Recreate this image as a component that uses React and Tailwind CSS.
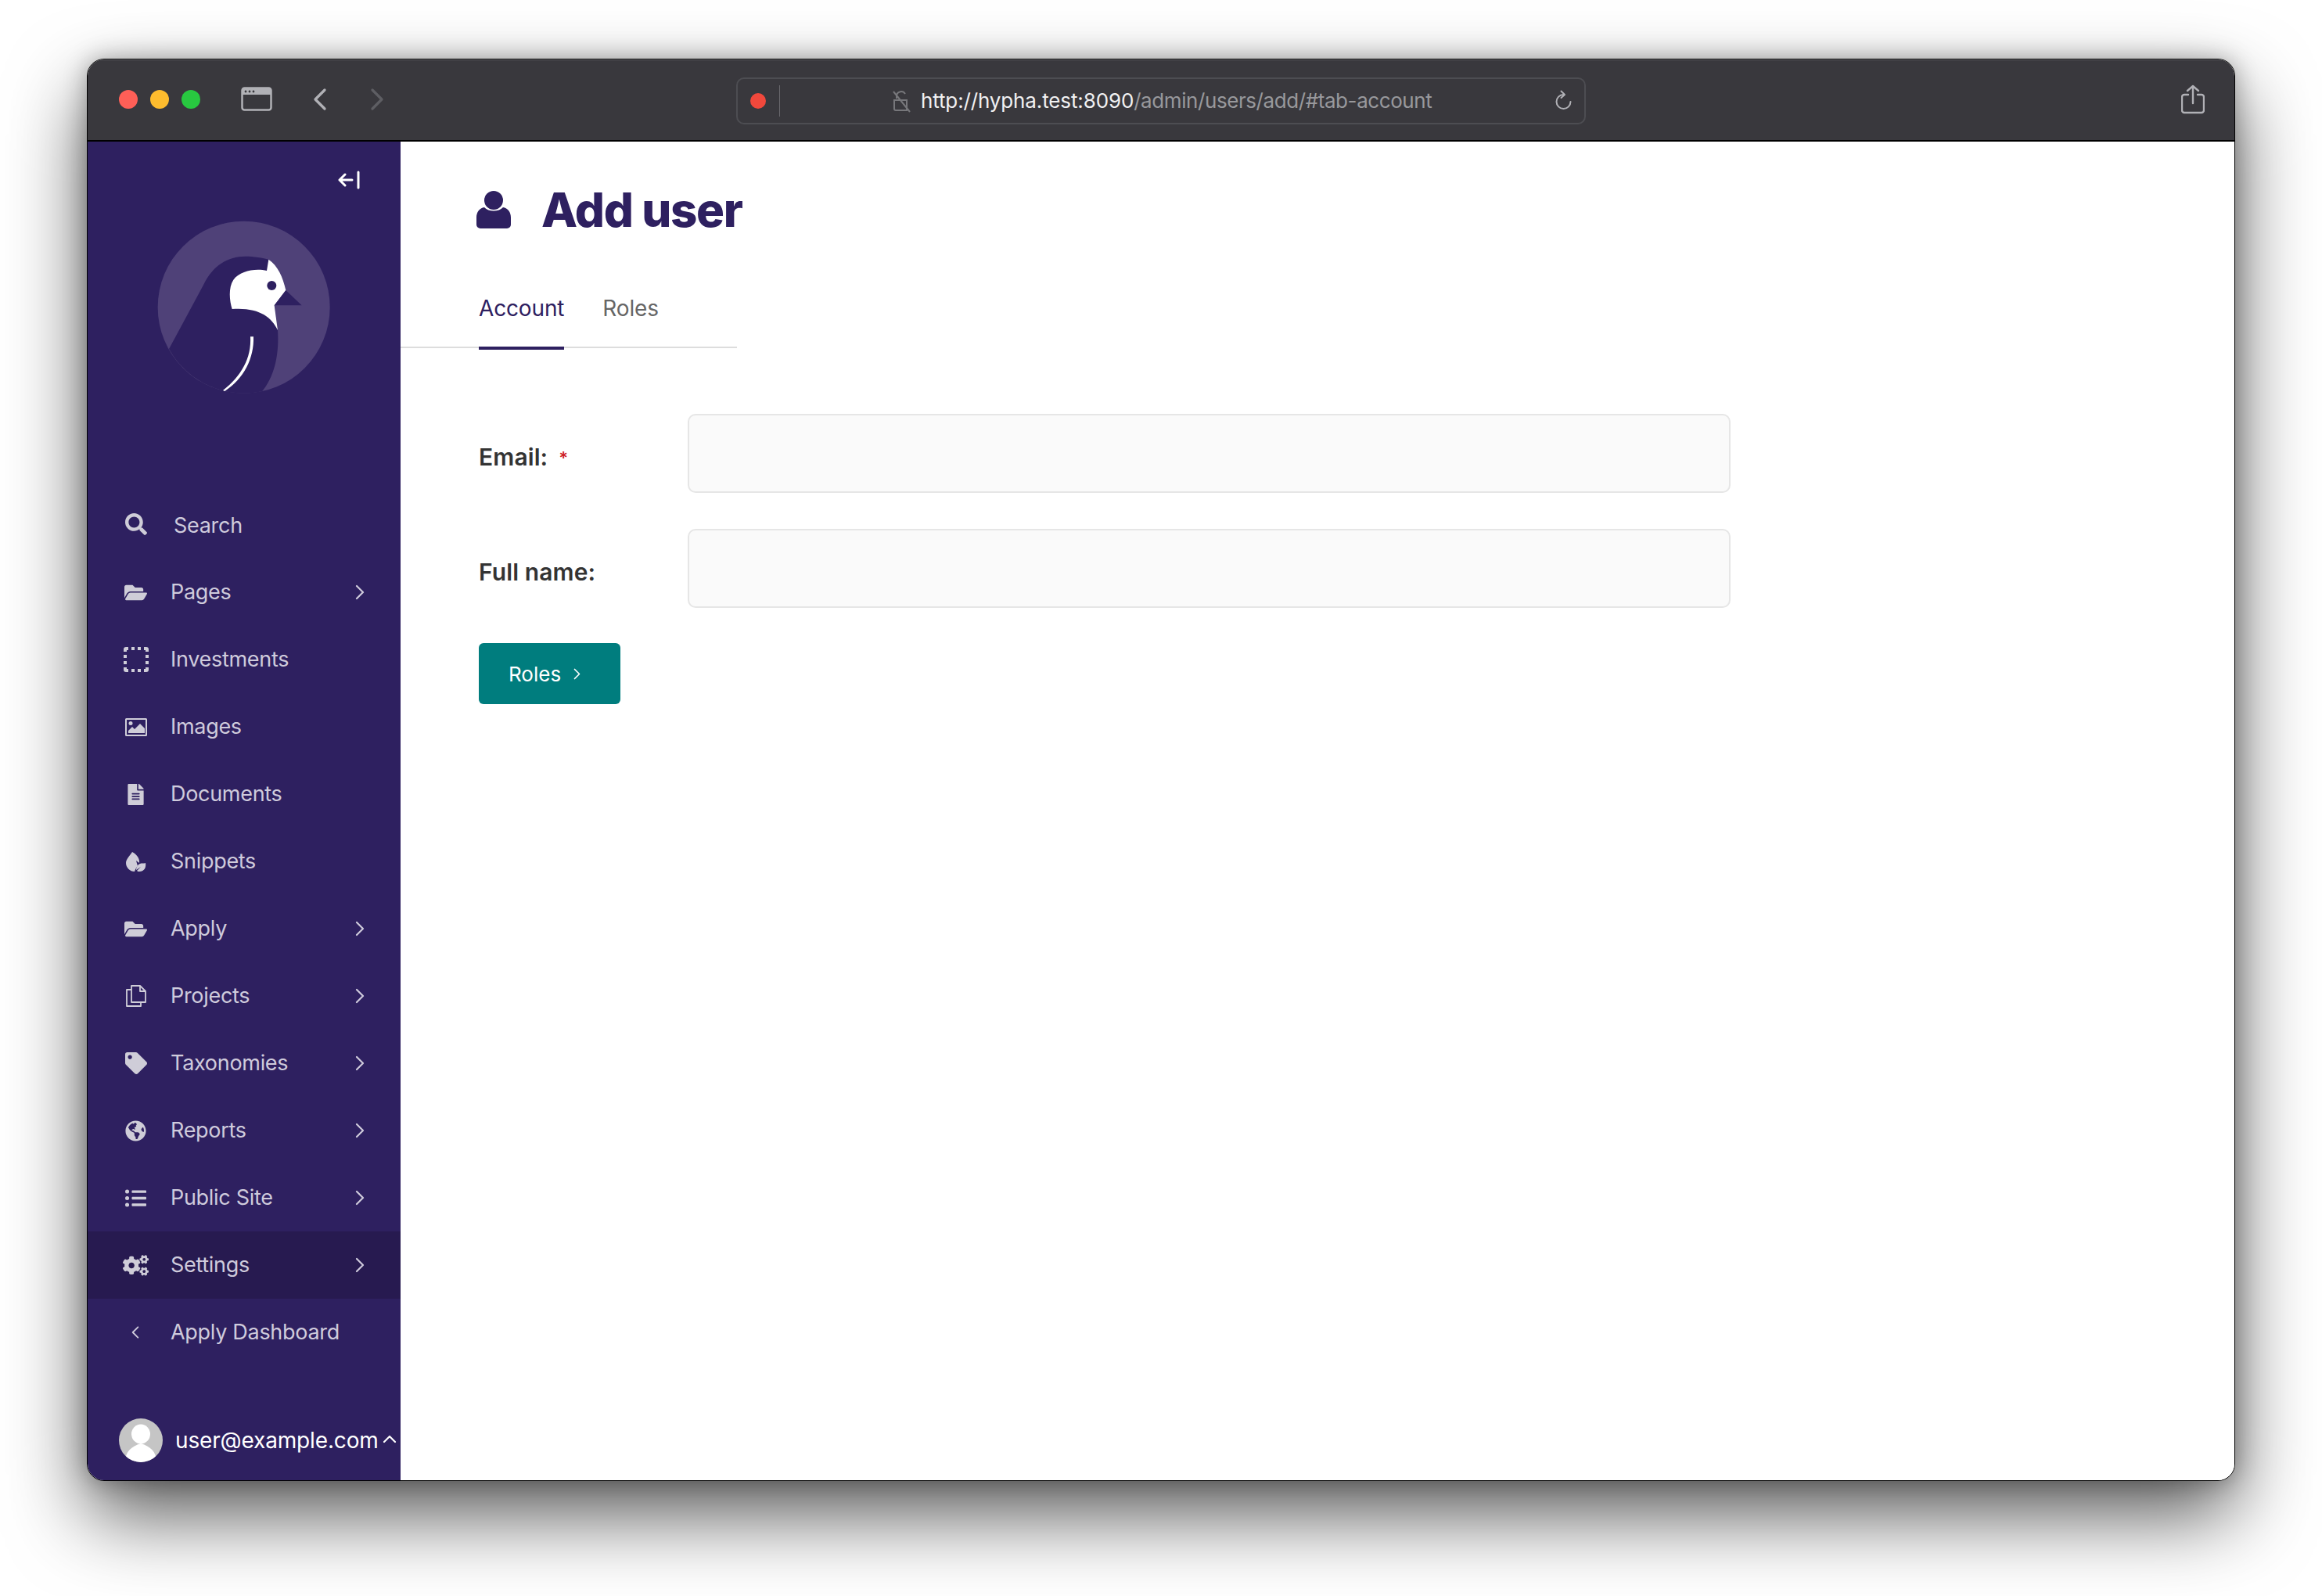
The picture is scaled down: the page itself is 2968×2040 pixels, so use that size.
import React from "react";
import { FaSearch, FaFolderOpen, FaFileAlt, FaTag, FaGlobeAmericas, FaListUl, FaCogs } from "react-icons/fa";

const Chevron = ({ className = "", dir = "right" }) => (
  <svg viewBox="0 0 12 20" className={className} fill="none" stroke="currentColor" strokeWidth="2.2" strokeLinecap="round" strokeLinejoin="round">
    <path d={dir === "right" ? "M2 2l8 8-8 8" : "M10 2l-8 8 8 8"} />
  </svg>
);

const Dashed = () => (
  <svg viewBox="0 0 32 32" className="w-[32px] h-[32px]" fill="currentColor">
    <path d="M0 3a3 3 0 0 1 3-3h3v4H4v2H0zM26 0h3a3 3 0 0 1 3 3v3h-4V4h-2zM0 26h4v2h2v4H3a3 3 0 0 1-3-3zM28 26h4v3a3 3 0 0 1-3 3h-3v-4h2z" />
    <rect x="10" y="0" width="4" height="4" /><rect x="18" y="0" width="4" height="4" />
    <rect x="10" y="28" width="4" height="4" /><rect x="18" y="28" width="4" height="4" />
    <rect x="0" y="10" width="4" height="4" /><rect x="0" y="18" width="4" height="4" />
    <rect x="28" y="10" width="4" height="4" /><rect x="28" y="18" width="4" height="4" />
  </svg>
);

const ImageIcon = () => (
  <svg viewBox="0 0 28 23" className="w-[28px] h-[23px]" fill="currentColor">
    <path fillRule="evenodd" d="M1.5 0h25A1.5 1.5 0 0 1 28 1.5v20a1.5 1.5 0 0 1-1.5 1.5h-25A1.5 1.5 0 0 1 0 21.500v-20A1.500 1.500 0 0 1 1.500 0zM2 2v19h24V2z" />
    <circle cx="7" cy="6.500" r="2.500" />
    <path d="M4 19v-3l5-5 3 3 7-7 6 6v6z" />
  </svg>
);

const LeafIcon = () => (
  <svg viewBox="0 0 27 27" className="w-[27px] h-[27px]" fill="currentColor">
    <path d="M9 1C15 4 19 10 18 15L14 12L16 19C14 21 13 23 12 26C6 26 1 21 1 15C1 10 6 6 9 1Z" />
    <path d="M26 15C27 20 25 26 18 26C17 26 16 26 15 25L20 20L14 24C14 21 16 17 19 16C21 15 24 16 26 15Z" />
  </svg>
);

const CopyIcon = () => (
  <svg viewBox="0 0 26 28" className="w-[26px] h-[28px]" fill="none" stroke="currentColor" strokeWidth="1.800" strokeLinejoin="round">
    <path d="M7 1h11l7 7v14H7z" />
    <path d="M18 1v7h7" />
    <path d="M7 6H1v21h18v-5" />
  </svg>
);

const items = [
  { label: "Pages", icon: <FaFolderOpen className="w-[29px] h-[29px]" />, more: true },
  { label: "Investments", icon: <Dashed /> },
  { label: "Images", icon: <ImageIcon /> },
  { label: "Documents", icon: <FaFileAlt className="w-[27px] h-[27px]" /> },
  { label: "Snippets", icon: <LeafIcon /> },
  { label: "Apply", icon: <FaFolderOpen className="w-[29px] h-[29px]" />, more: true },
  { label: "Projects", icon: <CopyIcon />, more: true },
  { label: "Taxonomies", icon: <FaTag className="w-[28px] h-[28px]" />, more: true },
  { label: "Reports", icon: <FaGlobeAmericas className="w-[27px] h-[27px]" />, more: true },
  { label: "Public Site", icon: <FaListUl className="w-[27px] h-[27px]" />, more: true },
  { label: "Settings", icon: <FaCogs className="w-[33px] h-[33px]" />, more: true, active: true },
];

function Row({ label, icon, more, active }) {
  return (
    <div className={`flex items-center h-[86px] text-[27px] tracking-[-0.3px] text-[#cfcbdc] ${active ? "bg-[#271a50]" : ""}`}>
      <div className="w-[124px] pr-[1px] flex justify-center shrink-0 text-[#cfcdd8]">{icon}</div>
      <span className="flex-1 -ml-[18px]">{label}</span>
      {more && <Chevron className="w-[12px] h-[20px] mr-[46px]" />}
    </div>
  );
}

function Logo() {
  return (
    <svg viewBox="0 0 810 780" className="w-[270px] h-[260px]">
      <circle cx="395" cy="395" r="330" fill="#4f4178" />
      <path d="M108 555L240 310C275 235 335 200 400 200C430 200 470 205 490 212L525 483C530 560 520 650 465 718A330 330 0 0 1 108 555Z" fill="#2e2060" />
      <path d="M490 212C525 235 545 280 556 330L512 388L525 483C500 430 450 395 350 402C340 370 335 320 355 290C380 255 440 245 483 255Z" fill="#fff" />
      <path d="M556 330L617 388H512Z" fill="#2e2060" />
      <circle cx="502" cy="312" r="18" fill="#2e2060" />
      <path d="M420 508H432C435 590 395 670 322 717L315 714C385 660 425 590 420 508Z" fill="#fff" />
    </svg>
  );
}

function TitleBar() {
  return (
    <div className="relative h-[105px] shrink-0 bg-[#39383d] border-b-2 border-black shadow-[inset_0_1px_0_#66666a] flex items-center">
      <div className="flex items-center gap-[16px] ml-[40px] -mt-[2px]">
        <div className="w-[24px] h-[24px] rounded-full bg-[#ff5f57]" />
        <div className="w-[24px] h-[24px] rounded-full bg-[#febc2e]" />
        <div className="w-[24px] h-[24px] rounded-full bg-[#28c840]" />
      </div>
      <svg viewBox="0 0 40 31" className="w-[40px] h-[31px] ml-[52px] -mt-[2px]" fill="none">
        <rect x="1.500" y="1.500" width="37" height="28" rx="3" stroke="#b1b1b6" strokeWidth="2.500" />
        <path d="M1.500 5a3 3 0 0 1 3-3.500h31a3 3 0 0 1 3 3.500v5h-37z" fill="#b1b1b6" />
        <circle cx="6" cy="6" r="1.400" fill="#39383d" /><circle cx="11" cy="6" r="1.400" fill="#39383d" /><circle cx="16" cy="6" r="1.400" fill="#39383d" />
      </svg>
      <Chevron className="w-[18px] h-[30px] ml-[52px] -mt-[2px] text-[#b1b1b6]" dir="left" />
      <Chevron className="w-[18px] h-[30px] ml-[55px] -mt-[2px] text-[#5e5e63]" />
      <div className="absolute left-[829px] top-[23px] w-[1086px] h-[60px] rounded-[10px] border-2 border-[#4d4d52] flex items-center">
        <div className="w-[20px] h-[20px] rounded-full bg-[#f1483c] ml-[16px] shrink-0" />
        <div className="w-[1px] h-[40px] bg-[#68686c] ml-[17px] shrink-0" />
        <svg viewBox="0 0 25 29" className="w-[25px] h-[29px] ml-[143px] shrink-0" fill="none" stroke="#77777b" strokeWidth="2">
          <path d="M6 11V7a6 6 0 0 1 11-2M3 13h16v13H5a2 2 0 0 1-2-2zM2 2l21 26" />
        </svg>
        <span className="ml-[12px] text-[26px] tracking-[-0.13px] whitespace-nowrap text-[#f1f1f2] -translate-y-[1px]">
          http://hypha.test:8090<span className="text-[#98989c] tracking-[-0.42px]">/admin/users/add/#tab-account</span>
        </span>
        <svg viewBox="0 0 22 26" className="absolute right-[15px] top-[14px] w-[22px] h-[26px]" fill="none" stroke="#b1b1b6" strokeWidth="2" strokeLinecap="round" strokeLinejoin="round">
          <path d="M10.500 6A9 9 0 1 0 19.500 15" />
          <path d="M7.500 1.500L12 6l-4.500 4" />
        </svg>
      </div>
      <svg viewBox="0 0 30 38" className="absolute left-[2676px] top-[32px] w-[30px] h-[38px]" fill="none" stroke="#b1b1b6" strokeWidth="2.400" strokeLinecap="round" strokeLinejoin="round">
        <path d="M9 13H4a3 3 0 0 0-3 3v17a3 3 0 0 0 3 3h22a3 3 0 0 0 3-3V16a3 3 0 0 0-3-3h-5" />
        <path d="M15 24V2M8 8l7-6 7 6" />
      </svg>
    </div>
  );
}

function Sidebar() {
  return (
    <aside className="w-[400px] shrink-0 bg-[#2e2060] flex flex-col">
      <div className="flex justify-end pr-[52px] pt-[37px]">
        <svg viewBox="0 0 28 24" className="w-[28px] h-[24px]" fill="none" stroke="#fff" strokeWidth="3" strokeLinecap="round" strokeLinejoin="round">
          <path d="M26 2v20M18 12H2M9 5l-7 7 7 7" />
        </svg>
      </div>
      <div className="pl-[68px] mt-[19px] mb-[110px]"><Logo /></div>
      <div className="flex items-center h-[84px] mt-[-1px] text-[27px] tracking-[-0.3px] text-[#cfcbdc]">
        <FaSearch className="w-[28px] h-[28px] ml-[48px] -mt-[4px] text-[#cfcdd8]" />
        <span className="ml-[34px]">Search</span>
      </div>
      {items.map((it) => <Row key={it.label} {...it} />)}
      <div className="flex items-center h-[86px] text-[27px] tracking-[-0.3px] text-[#cfcbdc]">
        <div className="w-[124px] pr-[2px] flex justify-center shrink-0"><Chevron className="w-[10px] h-[18px]" dir="left" /></div>
        <span className="-ml-[18px]">Apply Dashboard</span>
      </div>
      <div className="mt-auto mb-[23px] flex items-center pl-[40px]">
        <svg viewBox="0 0 56 56" className="w-[56px] h-[56px] shrink-0">
          <defs><clipPath id="av"><circle cx="28" cy="28" r="28" /></clipPath></defs>
          <circle cx="28" cy="28" r="28" fill="#c5c5c5" />
          <g clipPath="url(#av)" fill="#fff">
            <ellipse cx="28" cy="20" rx="12" ry="12.500" />
            <path d="M8 56c0-14 8-20 20-24 12 4 20 10 20 24z" />
          </g>
        </svg>
        <span className="ml-[16px] text-[28px] tracking-[-0.15px] text-white whitespace-nowrap">user@example.com</span>
        <svg viewBox="0 0 18 11" className="w-[18px] h-[11px] ml-[5px] -mt-[4px] shrink-0" fill="none" stroke="#fff" strokeWidth="2.200" strokeLinecap="round" strokeLinejoin="round">
          <path d="M2 9l7-7 7 7" />
        </svg>
      </div>
    </aside>
  );
}

function Field({ label, required }) {
  return (
    <div className="flex items-center h-[101px]">
      <label className="w-[267px] shrink-0 text-[30px] font-semibold tracking-[0.1px] text-[#333] translate-y-[5px]">
        {label}
        {required && <span className="ml-[14px] text-[22px] text-[#cd2026] align-[2px]">*</span>}
      </label>
      <div className="w-[1333px] h-full rounded-[10px] border-2 border-[#e6e6e6] bg-[#fafafa]" />
    </div>
  );
}

function Main() {
  return (
    <main className="flex-1 bg-white">
      <div className="flex items-center pl-[97px] pt-[57px] h-[116px]">
        <svg viewBox="0 0 44 48" className="w-[44px] h-[48px] shrink-0" fill="#2e2060">
          <circle cx="22" cy="12" r="12" />
          <path d="M10 21c3 3 7 4.500 12 4.500S31 24 34 21c6 1 10 6 10 13v9a5 5 0 0 1-5 5H5a5 5 0 0 1-5-5v-9c0-7 4-12 10-13z" />
        </svg>
        <h1 className="ml-[39px] text-[60px] leading-none font-extrabold text-[#2e2060] tracking-[-1.4px]">Add user</h1>
      </div>
      <div className="w-[430px] h-[96px] mt-[52px] border-b-2 border-[#ddd] flex pl-[100px] gap-[49px] text-[28px] tracking-[-0.15px]">
        <div className="h-[98px] pt-[24px] border-b-4 border-[#2e2060] text-[#2e2060]">Account</div>
        <div className="pt-[24px] text-[#666]">Roles</div>
      </div>
      <div className="pl-[100px] pt-[84px] flex flex-col gap-[46px]">
        <Field label="Email:" required />
        <Field label="Full name:" />
      </div>
      <div className="pl-[100px] mt-[45px]">
        <div className="inline-flex items-center h-[78px] w-[181px] pl-[38px] rounded-[6px] bg-[#007d7e] text-white text-[26px]">
          Roles
          <Chevron className="w-[9px] h-[15px] ml-[16px]" />
        </div>
      </div>
    </main>
  );
}

export default function App() {
  return (
    <div className="w-[2968px] h-[2040px] bg-white pl-[111px] pt-[75px] font-['Inter',sans-serif] overflow-hidden">
      <div className="w-[2746px] h-[1818px] rounded-[22px] border border-black overflow-hidden flex flex-col bg-white shadow-[0_44px_100px_rgba(0,0,0,0.65),0_0_30px_rgba(0,0,0,0.3)]">
        <TitleBar />
        <div className="flex-1 flex min-h-0">
          <Sidebar />
          <Main />
        </div>
      </div>
    </div>
  );
}
